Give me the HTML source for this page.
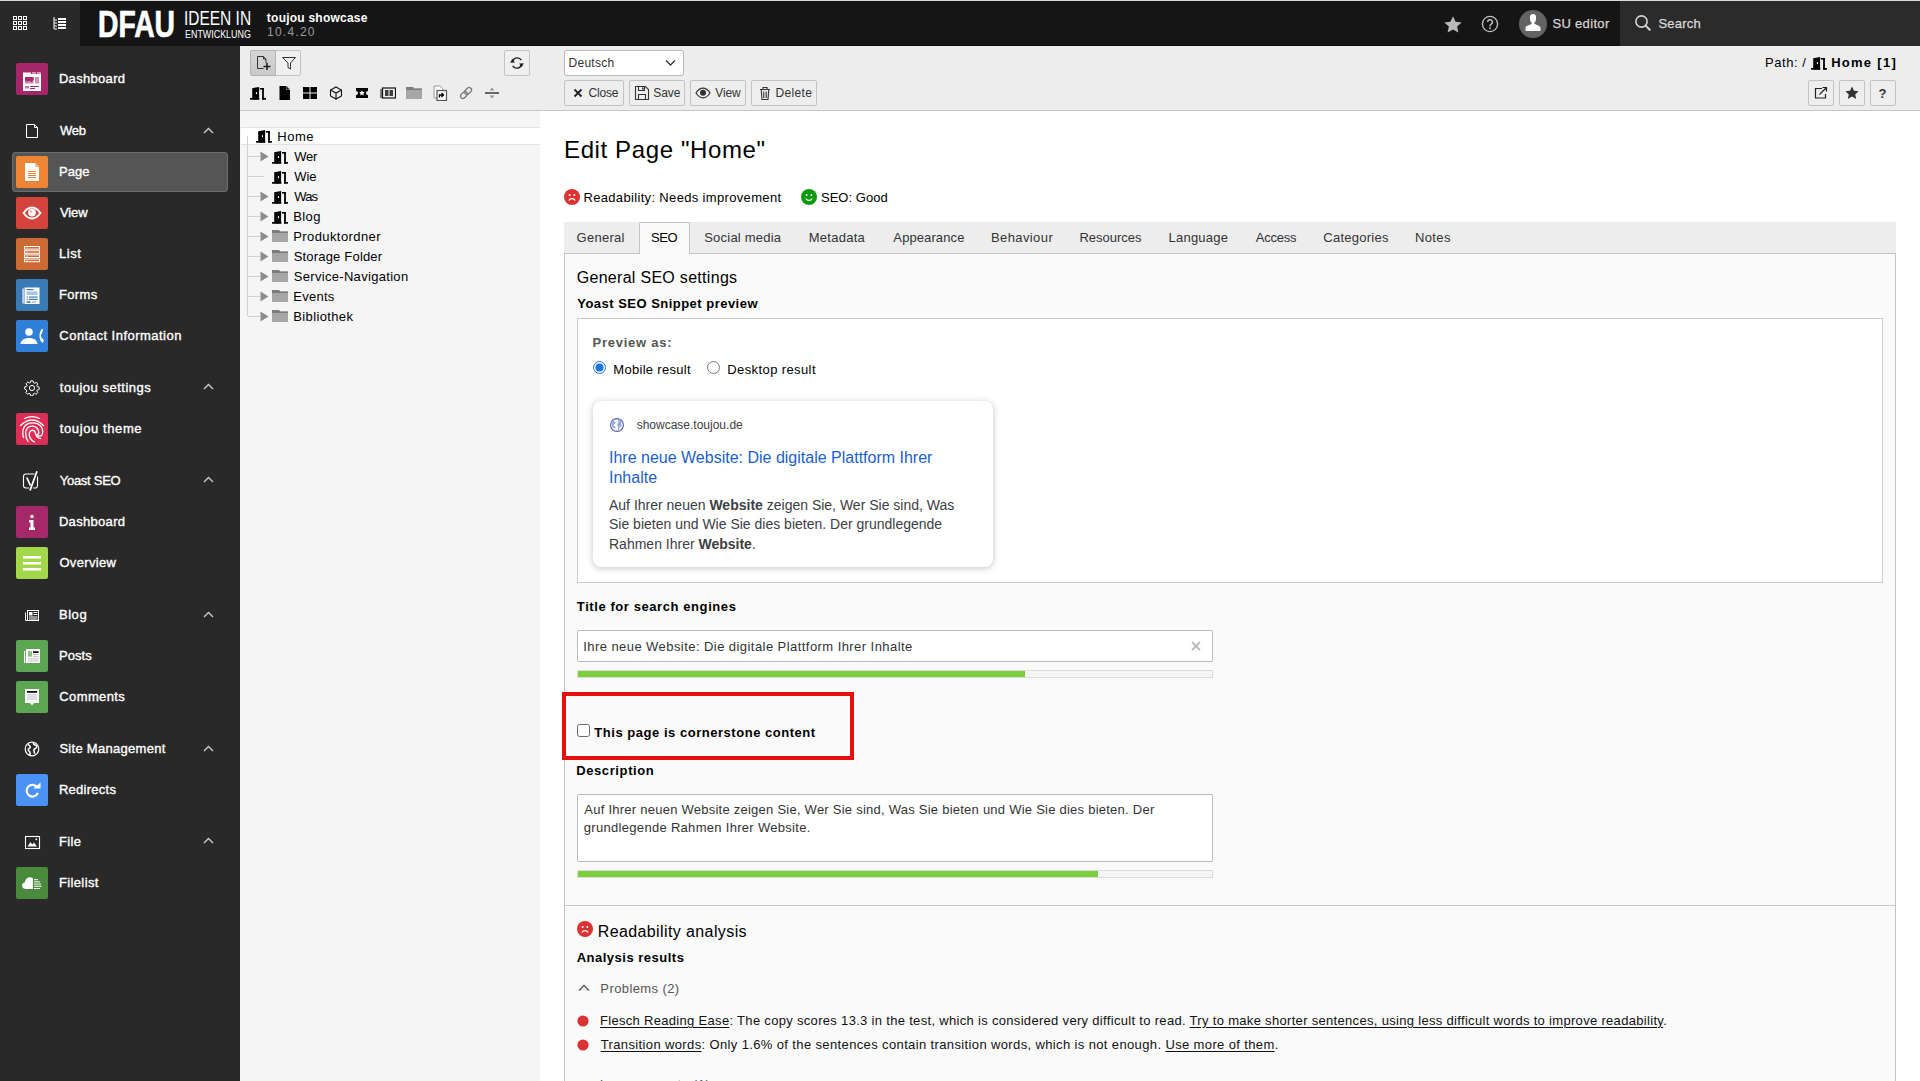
<!DOCTYPE html>
<html><head><meta charset="utf-8"><title>TYPO3</title>
<style>
html,body{margin:0;padding:0;width:1920px;height:1081px;overflow:hidden;background:#fff;}
body{position:relative;font-family:"Liberation Sans",sans-serif;}
.a{position:absolute;display:block;}
.t{position:absolute;white-space:nowrap;font-family:"Liberation Sans",sans-serif;}
u{text-decoration:underline;text-decoration-thickness:1px;text-underline-offset:2px;}
</style></head><body>
<div class="a" style="left:0px;top:0px;width:1920px;height:46px;background:#151515;"></div>
<div class="a" style="left:0px;top:0px;width:80px;height:46px;background:#292929;"></div>
<div class="a" style="left:1620px;top:0px;width:300px;height:46px;background:#2b2b2b;"></div>
<div class="a" style="left:0px;top:0px;width:1920px;height:1px;background:#d9d9d9;"></div>
<div class="a" style="left:240px;top:45px;width:1380px;height:1px;background:#0a0a0a;"></div>
<svg class="a" style="left:0px;top:0px;" width="40" height="46" viewBox="0 0 40 46"><rect x="13.5" y="16.5" width="3" height="3" fill="none" stroke="#fff" stroke-width="1"/><rect x="18.5" y="16.5" width="3" height="3" fill="none" stroke="#fff" stroke-width="1"/><rect x="23.5" y="16.5" width="3" height="3" fill="none" stroke="#fff" stroke-width="1"/><rect x="13.5" y="21.5" width="3" height="3" fill="none" stroke="#fff" stroke-width="1"/><rect x="18.5" y="21.5" width="3" height="3" fill="none" stroke="#fff" stroke-width="1"/><rect x="23.5" y="21.5" width="3" height="3" fill="none" stroke="#fff" stroke-width="1"/><rect x="13.5" y="26.5" width="3" height="3" fill="none" stroke="#fff" stroke-width="1"/><rect x="18.5" y="26.5" width="3" height="3" fill="none" stroke="#fff" stroke-width="1"/><rect x="23.5" y="26.5" width="3" height="3" fill="none" stroke="#fff" stroke-width="1"/></svg>
<svg class="a" style="left:50px;top:14px;" width="20" height="20" viewBox="0 0 20 20"><path d="M4 3v12h3M4 6h3M4 9h3M4 12h3" stroke="#fff" stroke-width="1" fill="none"/><rect x="8" y="4" width="8" height="2" fill="#fff"/><rect x="8" y="7" width="8" height="2" fill="#fff"/><rect x="8" y="10" width="8" height="2" fill="#fff"/><rect x="8" y="13" width="8" height="2" fill="#fff"/></svg>
<div class="t" style="left:98.1px;top:1.7px;font-size:37px;line-height:46px;font-weight:700;color:#fff;transform:scaleX(0.765);transform-origin:0 0;-webkit-text-stroke:0.7px #fff">DFAU</div>
<div class="t" style="left:184.2px;top:5.4px;font-size:21px;line-height:26px;color:#fff;transform:scaleX(0.737);transform-origin:0 0">IDEEN IN</div>
<div class="t" style="left:184.9px;top:27.6px;font-size:11px;line-height:13px;color:#fff;transform:scaleX(0.81);transform-origin:0 0">ENTWICKLUNG</div>
<div class="t" style="left:266.85px;top:11.44px;font-size:12px;line-height:14px;color:#fff;letter-spacing:0.229px;font-weight:700;">toujou showcase</div>
<div class="t" style="left:267.09px;top:24.84px;font-size:12px;line-height:14px;color:#9a9a9a;letter-spacing:1.224px;">10.4.20</div>
<svg class="a" style="left:1443px;top:15px;" width="20" height="18" viewBox="0 0 20 18"><path d="M10 1.2l2.6 5.6 6.1.6-4.6 4.1 1.3 6-5.4-3.1-5.4 3.1 1.3-6L1.3 7.4l6.1-.6z" fill="#b9b9b9"/></svg>
<svg class="a" style="left:1481px;top:15px;" width="18" height="18" viewBox="0 0 18 18"><circle cx="9" cy="9" r="7.6" fill="none" stroke="#bdbdbd" stroke-width="1.4"/><path d="M6.6 7.1a2.4 2.4 0 1 1 3.4 2.2c-.7.4-1 .8-1 1.6v.6" fill="none" stroke="#bdbdbd" stroke-width="1.5"/><circle cx="9" cy="13.2" r=".95" fill="#bdbdbd"/></svg>
<svg class="a" style="left:1519px;top:10px;" width="28" height="28" viewBox="0 0 28 28"><circle cx="14" cy="14" r="14" fill="#636363"/><path d="M11 6.5c0-1.6 1.3-2.5 3-2.5s3 .9 3 2.5v3c0 1.3-.8 2.6-1.6 3.1v1.2l4.8 2.2c.8.4 1.3 1.1 1.3 2V21H6.5v-2.9c0-.9.5-1.6 1.3-2l4.8-2.2v-1.2c-.8-.5-1.6-1.8-1.6-3.1z" fill="#fff"/></svg>
<div class="t" style="left:1552.41px;top:16.40px;font-size:13px;line-height:15px;color:#d4d4d4;letter-spacing:0.327px;-webkit-text-stroke:0.25px #d4d4d4;">SU editor</div>
<svg class="a" style="left:1634px;top:14px;" width="18" height="18" viewBox="0 0 18 18"><circle cx="7.5" cy="7.5" r="5.6" fill="none" stroke="#d6d6d6" stroke-width="1.6"/><path d="M11.6 11.6l4.2 4.2" stroke="#d6d6d6" stroke-width="2" stroke-linecap="round"/></svg>
<div class="t" style="left:1658.41px;top:16.40px;font-size:13px;line-height:15px;color:#dadada;letter-spacing:0.249px;-webkit-text-stroke:0.25px #dadada;">Search</div>
<div class="a" style="left:0px;top:46px;width:240px;height:1035px;background:#292929;"></div>
<div class="a" style="left:12px;top:152px;width:216px;height:40px;background:#555555;border:1px solid #6c6c6c;border-radius:3px;box-sizing:border-box;"></div>
<svg class="a" style="left:16px;top:63px;" width="32" height="32" viewBox="0 0 32 32"><rect width="32" height="32" rx="2" fill="#a4276a"/><path d="M7 9.5h8v1.5h10v17H7z" fill="#fff"/><rect x="16" y="9.5" width="4" height="1" fill="#fff"/><rect x="21" y="9.5" width="4" height="1" fill="#fff"/><path d="M9 14h8.5v6.5H9z" fill="#a4276a" opacity=".55"/><path d="M9 14h8.5v3l-2 2-2-1.5-2 1-2.5-1z" fill="#a4276a"/><rect x="19" y="14" width="4" height="6.5" fill="#a4276a" opacity=".5"/><rect x="9" y="23" width="4" height="2.5" fill="#a4276a" opacity=".6"/><rect x="14" y="23" width="9" height="1" fill="#a4276a"/><rect x="14" y="25" width="5" height="1" fill="#a4276a"/></svg>
<div class="t" style="left:58.93px;top:71.30px;font-size:13px;line-height:15px;color:#fff;letter-spacing:0.313px;-webkit-text-stroke:0.35px #fff;">Dashboard</div>
<svg class="a" style="left:24px;top:123px;" width="16" height="16" viewBox="0 0 16 16"><path d="M2.5 1.5h8l3 3v10h-11z" fill="none" stroke="#fff" stroke-width="1"/><path d="M10.5 1.5v3h3" fill="none" stroke="#fff" stroke-width="1"/></svg>
<div class="t" style="left:59.94px;top:123.30px;font-size:13px;line-height:15px;color:#fff;letter-spacing:-0.213px;-webkit-text-stroke:0.35px #fff;">Web</div>
<svg class="a" style="left:203px;top:126.5px;" width="11" height="8" viewBox="0 0 11 8"><path d="M1 6l4.5-4.5L10 6" fill="none" stroke="#cfcfcf" stroke-width="1.3"/></svg>
<svg class="a" style="left:16px;top:156px;" width="32" height="32" viewBox="0 0 32 32"><rect width="32" height="32" rx="2" fill="#ee8435"/><path d="M9 7h10l4 4v14H9z" fill="#fff"/><path d="M19 7v4h4z" fill="#f5b98a"/><g fill="#ee8435"><rect x="12" y="15" width="8" height="1"/><rect x="12" y="17" width="8" height="1"/><rect x="12" y="19" width="8" height="1"/><rect x="12" y="21" width="8" height="1"/></g></svg>
<div class="t" style="left:58.93px;top:164.30px;font-size:13px;line-height:15px;color:#fff;letter-spacing:0.094px;-webkit-text-stroke:0.35px #fff;">Page</div>
<svg class="a" style="left:16px;top:197px;" width="32" height="32" viewBox="0 0 32 32"><rect width="32" height="32" rx="2" fill="#d6433c"/><path d="M6.5 16c2.6-4.2 5.8-6.5 9.5-6.5s6.9 2.3 9.5 6.5c-2.6 4.2-5.8 6.5-9.5 6.5s-6.9-2.3-9.5-6.5z" fill="#fff"/><path d="M8.8 16c2.1-3 4.5-4.6 7.2-4.6s5.1 1.6 7.2 4.6c-2.1 3-4.5 4.6-7.2 4.6s-5.1-1.6-7.2-4.6z" fill="#d6433c"/><circle cx="16" cy="15.6" r="3.9" fill="#fff"/><circle cx="14.8" cy="14.4" r="1.2" fill="#d6433c" opacity=".45"/></svg>
<div class="t" style="left:59.94px;top:205.30px;font-size:13px;line-height:15px;color:#fff;letter-spacing:-0.117px;-webkit-text-stroke:0.35px #fff;">View</div>
<svg class="a" style="left:16px;top:238px;" width="32" height="32" viewBox="0 0 32 32"><rect width="32" height="32" rx="2" fill="#cc6a36"/><rect x="8.5" y="8.5" width="15" height="2.6" fill="none" stroke="#fff" stroke-width="1"/><rect x="10.5" y="9.5" width=".9" height=".9" fill="#fff"/><rect x="8.5" y="12.7" width="15" height="2.6" fill="none" stroke="#fff" stroke-width="1"/><rect x="10.5" y="13.7" width=".9" height=".9" fill="#fff"/><rect x="8.5" y="16.9" width="15" height="2.6" fill="none" stroke="#fff" stroke-width="1"/><rect x="10.5" y="17.9" width=".9" height=".9" fill="#fff"/><rect x="8.5" y="21.1" width="15" height="2.6" fill="none" stroke="#fff" stroke-width="1"/><rect x="10.5" y="22.1" width=".9" height=".9" fill="#fff"/></svg>
<div class="t" style="left:58.93px;top:246.30px;font-size:13px;line-height:15px;color:#fff;letter-spacing:0.577px;-webkit-text-stroke:0.35px #fff;">List</div>
<svg class="a" style="left:16px;top:279px;" width="32" height="32" viewBox="0 0 32 32"><rect width="32" height="32" rx="2" fill="#3b7bb5"/><path d="M6.5 9.5h1.2v15H6.5zM8.5 8.5h15v16.5h-15z" fill="#fff"/><rect x="10.5" y="10" width="7" height="1.2" fill="#3b7bb5"/><rect x="10.5" y="12.5" width="11" height="3.5" fill="#3b7bb5" opacity=".45"/><g fill="#3b7bb5"><rect x="10.5" y="17.5" width="1.2" height="1.2"/><rect x="13" y="17.5" width="8.5" height="1.2"/><rect x="10.5" y="19.8" width="1.2" height="1.2"/><rect x="13" y="19.8" width="8.5" height="1.2"/><rect x="10.5" y="22.2" width="4" height="1.6"/></g><rect x="16" y="22.2" width="4" height="1.6" fill="#3b7bb5" opacity=".45"/></svg>
<div class="t" style="left:58.93px;top:287.30px;font-size:13px;line-height:15px;color:#fff;letter-spacing:0.377px;-webkit-text-stroke:0.35px #fff;">Forms</div>
<svg class="a" style="left:16px;top:320px;" width="32" height="32" viewBox="0 0 32 32"><rect width="32" height="32" rx="2" fill="#2f80d8"/><circle cx="13" cy="12" r="3.8" fill="#fff"/><path d="M4.5 24c.4-3.8 3.6-6 8.5-6s8.1 2.2 8.5 6z" fill="#fff"/><path d="M26.5 8.5c-3.6 1.5-4.3 11.5 0 14.5l1.6-2.2-1.8-2.5c-.6.2-1-.5-1.2-1.8s-.1-2.6.5-2.8l1.4-3z" fill="#fff"/></svg>
<div class="t" style="left:59.34px;top:328.30px;font-size:13px;line-height:15px;color:#fff;letter-spacing:0.481px;-webkit-text-stroke:0.35px #fff;">Contact Information</div>
<svg class="a" style="left:24px;top:379.5px;" width="16" height="16" viewBox="0 0 16 16"><path d="M8 .8l1.2.2.4 1.8 1.1.5 1.5-1 1 .8-.2 0 .8 1-1 1.5.5 1.1 1.8.4.2 1.2-.2 1.2-1.8.4-.5 1.1 1 1.5-.8 1-1 .8-1.5-1-1.1.5-.4 1.8-1.2.2-1.2-.2-.4-1.8-1.1-.5-1.5 1-1-.8-.8-1 1-1.5-.5-1.1L.8 9.2.6 8l.2-1.2 1.8-.4.5-1.1-1-1.5.8-1 1-.8 1.5 1 1.1-.5.4-1.8z" fill="none" stroke="#fff" stroke-width="1"/><circle cx="8" cy="8" r="2.6" fill="none" stroke="#fff" stroke-width="1"/></svg>
<div class="t" style="left:59.80px;top:379.80px;font-size:13px;line-height:15px;color:#fff;letter-spacing:0.517px;-webkit-text-stroke:0.35px #fff;">toujou settings</div>
<svg class="a" style="left:203px;top:383.0px;" width="11" height="8" viewBox="0 0 11 8"><path d="M1 6l4.5-4.5L10 6" fill="none" stroke="#cfcfcf" stroke-width="1.3"/></svg>
<svg class="a" style="left:16px;top:413px;" width="32" height="32" viewBox="0 0 32 32"><rect width="32" height="32" rx="2" fill="#dc2e54"/><g fill="none" stroke="#fff" stroke-width="1.3" stroke-linecap="round"><path d="M8.5 5.5Q16 1.8 23.5 5.5"/><path d="M4.5 12.5Q16 1.5 27.5 12.5"/><path d="M7.5 24.5C5.5 17 8 10 16 9.8S27.5 15 26.5 20.5C26 23.5 22.5 24 21.5 21.5"/><path d="M12 28.5C8.5 23 9.5 17 11.5 15C14 12.2 20 12.5 22 16.5C23.2 19 22.5 21 21.5 21.5"/><path d="M18.5 29C14 27 12.5 22.5 13.5 19.5C14.5 16.5 18.5 16.5 19.2 19.5C19.8 22.5 21.5 25 24.5 25.5"/></g></svg>
<div class="t" style="left:59.80px;top:421.30px;font-size:13px;line-height:15px;color:#fff;letter-spacing:0.601px;-webkit-text-stroke:0.35px #fff;">toujou theme</div>
<svg class="a" style="left:22px;top:469.5px;" width="18" height="22" viewBox="0 0 18 22"><path d="M12.5 4H4a2.5 2.5 0 0 0-2.5 2.5v9A2.5 2.5 0 0 0 4 18h3M15.5 6.5v9a2.5 2.5 0 0 1-2.5 2.5h-2" fill="none" stroke="#fff" stroke-width="1.1"/><path d="M4.8 7.5l3.6 8M15 1.2L8 20.5" fill="none" stroke="#fff" stroke-width="1.8"/></svg>
<div class="t" style="left:59.71px;top:472.80px;font-size:13px;line-height:15px;color:#fff;letter-spacing:-0.263px;-webkit-text-stroke:0.35px #fff;">Yoast SEO</div>
<svg class="a" style="left:203px;top:476.0px;" width="11" height="8" viewBox="0 0 11 8"><path d="M1 6l4.5-4.5L10 6" fill="none" stroke="#cfcfcf" stroke-width="1.3"/></svg>
<svg class="a" style="left:16px;top:506px;" width="32" height="32" viewBox="0 0 32 32"><rect width="32" height="32" rx="2" fill="#a4286a"/><circle cx="16" cy="10.5" r="1.8" fill="#fff"/><path d="M13 14h4.5v7.5h1.5V24h-6v-2.5h1.5v-5H13z" fill="#fff"/></svg>
<div class="t" style="left:58.93px;top:514.30px;font-size:13px;line-height:15px;color:#fff;letter-spacing:0.313px;-webkit-text-stroke:0.35px #fff;">Dashboard</div>
<svg class="a" style="left:16px;top:547px;" width="32" height="32" viewBox="0 0 32 32"><rect width="32" height="32" rx="2" fill="#a3d74c"/><rect x="7" y="9" width="18" height="2.5" fill="#fff"/><rect x="7" y="15" width="18" height="2.5" fill="#fff"/><rect x="7" y="21" width="18" height="2.5" fill="#fff"/></svg>
<div class="t" style="left:59.38px;top:555.30px;font-size:13px;line-height:15px;color:#fff;letter-spacing:0.344px;-webkit-text-stroke:0.35px #fff;">Overview</div>
<svg class="a" style="left:24px;top:607px;" width="16" height="16" viewBox="0 0 16 16"><rect x="3.5" y="3.5" width="11" height="10" fill="none" stroke="#fff" stroke-width="1"/><path d="M1.5 5.5v8h2" fill="none" stroke="#fff" stroke-width="1"/><rect x="5" y="5" width="3.5" height="3.5" fill="#fff"/><path d="M9.5 5.5h4M9.5 7.5h4M5 10h8.5M5 12h8.5" stroke="#fff" stroke-width="1"/></svg>
<div class="t" style="left:58.93px;top:607.30px;font-size:13px;line-height:15px;color:#fff;letter-spacing:0.562px;-webkit-text-stroke:0.35px #fff;">Blog</div>
<svg class="a" style="left:203px;top:610.5px;" width="11" height="8" viewBox="0 0 11 8"><path d="M1 6l4.5-4.5L10 6" fill="none" stroke="#cfcfcf" stroke-width="1.3"/></svg>
<svg class="a" style="left:16px;top:640px;" width="32" height="32" viewBox="0 0 32 32"><rect width="32" height="32" rx="2" fill="#5ba553"/><rect x="8" y="11" width="1.2" height="12" fill="#fff"/><rect x="10" y="9" width="14" height="14" fill="#fff"/><rect x="12" y="11.2" width="4" height="5.5" fill="#5ba553" opacity=".7"/><rect x="17" y="11.2" width="5.5" height="1.8" fill="#111"/><g fill="#aaa"><rect x="17" y="14.3" width="5.5" height=".8"/><rect x="17" y="16.3" width="5.5" height=".8"/><rect x="12" y="18.5" width="10.5" height=".8"/><rect x="12" y="20.6" width="10.5" height=".8"/></g></svg>
<div class="t" style="left:58.93px;top:648.30px;font-size:13px;line-height:15px;color:#fff;letter-spacing:0.056px;-webkit-text-stroke:0.35px #fff;">Posts</div>
<svg class="a" style="left:16px;top:681px;" width="32" height="32" viewBox="0 0 32 32"><rect width="32" height="32" rx="2" fill="#5ba553"/><path d="M9 8h14v14h-5l-2 2.6-2-2.6H9z" fill="#fff"/><rect x="11" y="10" width="10" height="1.8" fill="#111"/><g fill="#aaa"><rect x="11" y="13.6" width="10" height=".8"/><rect x="11" y="15.6" width="10" height=".8"/><rect x="11" y="17.6" width="10" height=".8"/></g></svg>
<div class="t" style="left:59.34px;top:689.30px;font-size:13px;line-height:15px;color:#fff;letter-spacing:0.369px;-webkit-text-stroke:0.35px #fff;">Comments</div>
<svg class="a" style="left:24px;top:741px;" width="16" height="16" viewBox="0 0 16 16"><circle cx="8" cy="8" r="6.8" fill="none" stroke="#fff" stroke-width="1.2"/><path d="M4 3.5c1.5 1 2.5 1.2 2.3 2.8-.2 1.2-2.3 1-2 2.6.3 1.4 2 1.6 1.8 3.5l-.3 2M9.5 1.5c-.5 1.4.8 2.3 2 2.6 1.2.3 1.5 1.5 1 2.5-.6 1-2.3.7-2.6 2.2-.3 1.5 1 2.2.4 4" fill="none" stroke="#fff" stroke-width="1.6"/></svg>
<div class="t" style="left:59.41px;top:741.30px;font-size:13px;line-height:15px;color:#fff;letter-spacing:0.285px;-webkit-text-stroke:0.35px #fff;">Site Management</div>
<svg class="a" style="left:203px;top:744.5px;" width="11" height="8" viewBox="0 0 11 8"><path d="M1 6l4.5-4.5L10 6" fill="none" stroke="#cfcfcf" stroke-width="1.3"/></svg>
<svg class="a" style="left:16px;top:774px;" width="32" height="32" viewBox="0 0 32 32"><rect width="32" height="32" rx="2" fill="#4a92f5"/><path d="M21.3 13.5A5.8 5.8 0 1 0 21.8 19" fill="none" stroke="#fff" stroke-width="2.2"/><path d="M17.5 14.5h7V8.5z" fill="#fff"/></svg>
<div class="t" style="left:58.93px;top:782.30px;font-size:13px;line-height:15px;color:#fff;letter-spacing:0.266px;-webkit-text-stroke:0.35px #fff;">Redirects</div>
<svg class="a" style="left:24px;top:834.5px;" width="17" height="15" viewBox="0 0 17 15"><rect x="1.5" y="1.5" width="14" height="12" fill="none" stroke="#fff" stroke-width="1.1"/><path d="M3.5 11.5l3-4.5 1.8 2.5 1.7-2 3 4z" fill="#fff"/><rect x="11.5" y="3.5" width="1.6" height="1.6" fill="#fff"/></svg>
<div class="t" style="left:58.93px;top:833.80px;font-size:13px;line-height:15px;color:#fff;letter-spacing:0.399px;-webkit-text-stroke:0.35px #fff;">File</div>
<svg class="a" style="left:203px;top:837.0px;" width="11" height="8" viewBox="0 0 11 8"><path d="M1 6l4.5-4.5L10 6" fill="none" stroke="#cfcfcf" stroke-width="1.3"/></svg>
<svg class="a" style="left:16px;top:867px;" width="32" height="32" viewBox="0 0 32 32"><rect width="32" height="32" rx="2" fill="#4a8a3c"/><path d="M9.5 22c-2.2 0-3.5-1.6-3.5-3.4 0-1.7 1.2-3 2.8-3.2.3-2.9 2.3-5.2 5-5.2 1.1 0 2.2.4 3.1 1.1V22z" fill="#fff"/><g fill="#fff"><rect x="18" y="12.2" width="4" height="1"/><rect x="18" y="14.4" width="6" height="1"/><rect x="18" y="16.6" width="7" height="1"/><rect x="18" y="18.8" width="7.5" height="1"/><rect x="18" y="21" width="6" height="1"/></g></svg>
<div class="t" style="left:58.93px;top:875.30px;font-size:13px;line-height:15px;color:#fff;letter-spacing:0.375px;-webkit-text-stroke:0.35px #fff;">Filelist</div>
<div class="a" style="left:240px;top:46px;width:300px;height:64px;background:#ededed;"></div>
<div class="a" style="left:240px;top:110px;width:1680px;height:1px;background:#c6c6c6;"></div>
<div class="a" style="left:240px;top:111px;width:300px;height:970px;background:#f5f5f5;"></div>
<div class="a" style="left:250px;top:50px;width:51px;height:26px;background:#efefef;border:1px solid #c3c3c3;border-radius:2px;box-sizing:border-box;"></div>
<div class="a" style="left:250px;top:50px;width:26px;height:26px;background:linear-gradient(#d6d6d6,#c9c9c9);border:1px solid #b3b3b3;border-radius:2px 0 0 2px;box-sizing:border-box;"></div>
<svg class="a" style="left:256px;top:55px;" width="16" height="16" viewBox="0 0 16 16"><path d="M1.5 1.5h6l2.5 2.5v4M1.5 1.5v12h6" fill="none" stroke="#333" stroke-width="1"/><path d="M7.5 1.5v2.5H10" fill="none" stroke="#333" stroke-width="1"/><path d="M11 8v7M7.5 11.5h7" stroke="#222" stroke-width="1.6"/></svg>
<svg class="a" style="left:281px;top:55px;" width="16" height="16" viewBox="0 0 16 16"><path d="M1.5 2.5h13L9.5 8v6L7 12.5V8z" fill="none" stroke="#333" stroke-width="1"/></svg>
<div class="a" style="left:504px;top:50px;width:26px;height:26px;background:#efefef;border:1px solid #c3c3c3;border-radius:2px;box-sizing:border-box;"></div>
<svg class="a" style="left:509px;top:55px;" width="16" height="16" viewBox="0 0 16 16"><path d="M3.6 6.3A4.8 4.8 0 0 1 12.3 5.2M12.4 9.7A4.8 4.8 0 0 1 3.7 10.8" fill="none" stroke="#222" stroke-width="1.4"/><path d="M1.2 7.8L3.3 3.8l2.6 3.6zM14.8 8.2l-2.1 4-2.6-3.6z" fill="#222"/></svg>
<svg class="a" style="left:250px;top:86px;" width="16" height="14" viewBox="0 0 16 14"><rect x="0" y="12" width="9.3" height="1.7" fill="#000"/><path d="M2.2 2.2L9.1 .9V13.6H2.2z" fill="#000"/><rect x="5.9" y="6.2" width="1.1" height="1.9" fill="#fff"/><rect x="9.9" y="2" width="3.8" height="1.6" fill="#000"/><rect x="12.1" y="2" width="1.8" height="11.6" fill="#000"/><rect x="12.1" y="12" width="3.9" height="1.7" fill="#000"/></svg>
<svg class="a" style="left:278px;top:86px;" width="13" height="14" viewBox="0 0 12 14"><path d="M1 0h7l3.5 3.5V14H1z" fill="#000"/><path d="M8 0v3.5h3.5" fill="#fff" opacity=".9"/><path d="M8.5 .8v2.2h2.2z" fill="#000"/></svg>
<svg class="a" style="left:302px;top:86px;" width="16" height="14" viewBox="0 0 16 14"><rect x="1" y="1" width="6.5" height="5.5" fill="#000"/><rect x="8.5" y="1" width="6.5" height="5.5" fill="#000"/><rect x="1" y="7.5" width="6.5" height="5.5" fill="#000"/><rect x="8.5" y="7.5" width="6.5" height="5.5" fill="#000"/></svg>
<svg class="a" style="left:329px;top:86px;" width="14" height="14" viewBox="0 0 14 14"><path d="M7 1l5.5 3v6L7 13 1.5 10V4z M1.5 4L7 7l5.5-3M7 7v6" fill="none" stroke="#111" stroke-width="1.1"/></svg>
<svg class="a" style="left:355px;top:87px;" width="14" height="12" viewBox="0 0 14 12"><path d="M1 1h12v3a2 2 0 0 0 0 4v3H1V8a2 2 0 0 0 0-4z" fill="#000"/><path d="M7 3.2l.9 1.8 2 .2-1.5 1.3.5 2-1.9-1-1.9 1 .5-2L4.1 5.2l2-.2z" fill="#fff"/></svg>
<svg class="a" style="left:380px;top:87px;" width="16" height="12" viewBox="0 0 16 12"><rect x="2.5" y="1" width="13" height="10" fill="none" stroke="#111" stroke-width="1.2"/><path d="M1 2v9" stroke="#111" stroke-width="1"/><rect x="5" y="3" width="3.5" height="6" fill="#111" opacity=".8"/><rect x="9.5" y="3" width="3.5" height="6" fill="#111" opacity=".8"/></svg>
<svg class="a" style="left:406px;top:87px;" width="16" height="12" viewBox="0 0 16 12"><path d="M0 0h7l1 1.5h8V12H0z" fill="#a6a6a6"/><path d="M0 0h7l1 1.5h8v1.5H0z" fill="#7c7c7c"/></svg>
<svg class="a" style="left:433px;top:85px;" width="15" height="16" viewBox="0 0 15 16"><path d="M1 1h6l2.5 2.5V13H1z" fill="#fff" stroke="#999" stroke-width="1"/><rect x="4" y="5.5" width="9.5" height="10" fill="#fff" stroke="#555" stroke-width="1.2"/><path d="M6.5 12.5v-2.5h3.5M8.5 8l2 2-2 2" fill="none" stroke="#000" stroke-width="1.3"/></svg>
<svg class="a" style="left:458px;top:86px;" width="16" height="14" viewBox="0 0 16 14"><g transform="rotate(-45 8 7)"><rect x="1.2" y="4.6" width="7.6" height="4.8" rx="2.4" fill="none" stroke="#777" stroke-width="1.3"/><rect x="7.2" y="4.6" width="7.6" height="4.8" rx="2.4" fill="none" stroke="#777" stroke-width="1.3"/><rect x="6" y="6.2" width="4" height="1.6" fill="#999"/></g></svg>
<svg class="a" style="left:484px;top:86px;" width="16" height="14" viewBox="0 0 16 14"><rect x="1" y="6" width="14" height="2" fill="#666"/><path d="M5.5 4.5L8 1.5l2.5 3zM5.5 9.5L8 12.5l2.5-3z" fill="#9a9a9a"/></svg>
<div class="a" style="left:241px;top:127px;width:299px;height:18px;background:#fff;border-top:1px solid #e3e3e3;border-bottom:1px solid #e3e3e3;box-sizing:border-box;"></div>
<div class="a" style="left:247px;top:136px;width:1px;height:180px;background:#d0d0d0;"></div>
<svg class="a" style="left:256px;top:129px;" width="16" height="14" viewBox="0 0 16 14"><rect x="0" y="12" width="9.3" height="1.7" fill="#000"/><path d="M2.2 2.2L9.1 .9V13.6H2.2z" fill="#000"/><rect x="5.9" y="6.2" width="1.1" height="1.9" fill="#fff"/><rect x="9.9" y="2" width="3.8" height="1.6" fill="#000"/><rect x="12.1" y="2" width="1.8" height="11.6" fill="#000"/><rect x="12.1" y="12" width="3.9" height="1.7" fill="#000"/></svg>
<div class="t" style="left:277.33px;top:129.00px;font-size:13px;line-height:15px;color:#000;letter-spacing:0.489px;">Home</div>
<div class="a" style="left:248px;top:156px;width:12px;height:1px;background:#d0d0d0;"></div>
<svg class="a" style="left:260px;top:151px;" width="9" height="11" viewBox="0 0 9 11"><path d="M.5 .5l8 5-8 5z" fill="#8c8c8c"/></svg>
<svg class="a" style="left:272px;top:149.5px;" width="16" height="14" viewBox="0 0 16 14"><rect x="0" y="12" width="9.3" height="1.7" fill="#000"/><path d="M2.2 2.2L9.1 .9V13.6H2.2z" fill="#000"/><rect x="5.9" y="6.2" width="1.1" height="1.9" fill="#fff"/><rect x="9.9" y="2" width="3.8" height="1.6" fill="#000"/><rect x="12.1" y="2" width="1.8" height="11.6" fill="#000"/><rect x="12.1" y="12" width="3.9" height="1.7" fill="#000"/></svg>
<div class="t" style="left:294.24px;top:149.00px;font-size:13px;line-height:15px;color:#000;letter-spacing:-0.278px;">Wer</div>
<div class="a" style="left:248px;top:176px;width:16px;height:1px;background:#d0d0d0;"></div>
<svg class="a" style="left:272px;top:169.5px;" width="16" height="14" viewBox="0 0 16 14"><rect x="0" y="12" width="9.3" height="1.7" fill="#000"/><path d="M2.2 2.2L9.1 .9V13.6H2.2z" fill="#000"/><rect x="5.9" y="6.2" width="1.1" height="1.9" fill="#fff"/><rect x="9.9" y="2" width="3.8" height="1.6" fill="#000"/><rect x="12.1" y="2" width="1.8" height="11.6" fill="#000"/><rect x="12.1" y="12" width="3.9" height="1.7" fill="#000"/></svg>
<div class="t" style="left:294.24px;top:169.00px;font-size:13px;line-height:15px;color:#000;letter-spacing:-0.127px;">Wie</div>
<div class="a" style="left:248px;top:196px;width:12px;height:1px;background:#d0d0d0;"></div>
<svg class="a" style="left:260px;top:191px;" width="9" height="11" viewBox="0 0 9 11"><path d="M.5 .5l8 5-8 5z" fill="#8c8c8c"/></svg>
<svg class="a" style="left:272px;top:189.5px;" width="16" height="14" viewBox="0 0 16 14"><rect x="0" y="12" width="9.3" height="1.7" fill="#000"/><path d="M2.2 2.2L9.1 .9V13.6H2.2z" fill="#000"/><rect x="5.9" y="6.2" width="1.1" height="1.9" fill="#fff"/><rect x="9.9" y="2" width="3.8" height="1.6" fill="#000"/><rect x="12.1" y="2" width="1.8" height="11.6" fill="#000"/><rect x="12.1" y="12" width="3.9" height="1.7" fill="#000"/></svg>
<div class="t" style="left:294.24px;top:189.00px;font-size:13px;line-height:15px;color:#000;letter-spacing:-0.887px;">Was</div>
<div class="a" style="left:248px;top:216px;width:12px;height:1px;background:#d0d0d0;"></div>
<svg class="a" style="left:260px;top:211px;" width="9" height="11" viewBox="0 0 9 11"><path d="M.5 .5l8 5-8 5z" fill="#8c8c8c"/></svg>
<svg class="a" style="left:272px;top:209.5px;" width="16" height="14" viewBox="0 0 16 14"><rect x="0" y="12" width="9.3" height="1.7" fill="#000"/><path d="M2.2 2.2L9.1 .9V13.6H2.2z" fill="#000"/><rect x="5.9" y="6.2" width="1.1" height="1.9" fill="#fff"/><rect x="9.9" y="2" width="3.8" height="1.6" fill="#000"/><rect x="12.1" y="2" width="1.8" height="11.6" fill="#000"/><rect x="12.1" y="12" width="3.9" height="1.7" fill="#000"/></svg>
<div class="t" style="left:293.23px;top:209.00px;font-size:13px;line-height:15px;color:#000;letter-spacing:0.395px;">Blog</div>
<div class="a" style="left:248px;top:236px;width:12px;height:1px;background:#d0d0d0;"></div>
<svg class="a" style="left:260px;top:231px;" width="9" height="11" viewBox="0 0 9 11"><path d="M.5 .5l8 5-8 5z" fill="#8c8c8c"/></svg>
<svg class="a" style="left:272px;top:230px;" width="16" height="12" viewBox="0 0 16 12"><path d="M0 0h7l1 1.5h8V12H0z" fill="#a6a6a6"/><path d="M0 0h7l1 1.5h8v1.5H0z" fill="#7c7c7c"/></svg>
<div class="t" style="left:293.23px;top:229.00px;font-size:13px;line-height:15px;color:#000;letter-spacing:0.409px;">Produktordner</div>
<div class="a" style="left:248px;top:256px;width:12px;height:1px;background:#d0d0d0;"></div>
<svg class="a" style="left:260px;top:251px;" width="9" height="11" viewBox="0 0 9 11"><path d="M.5 .5l8 5-8 5z" fill="#8c8c8c"/></svg>
<svg class="a" style="left:272px;top:250px;" width="16" height="12" viewBox="0 0 16 12"><path d="M0 0h7l1 1.5h8V12H0z" fill="#a6a6a6"/><path d="M0 0h7l1 1.5h8v1.5H0z" fill="#7c7c7c"/></svg>
<div class="t" style="left:293.71px;top:249.00px;font-size:13px;line-height:15px;color:#000;letter-spacing:0.186px;">Storage Folder</div>
<div class="a" style="left:248px;top:276px;width:12px;height:1px;background:#d0d0d0;"></div>
<svg class="a" style="left:260px;top:271px;" width="9" height="11" viewBox="0 0 9 11"><path d="M.5 .5l8 5-8 5z" fill="#8c8c8c"/></svg>
<svg class="a" style="left:272px;top:270px;" width="16" height="12" viewBox="0 0 16 12"><path d="M0 0h7l1 1.5h8V12H0z" fill="#a6a6a6"/><path d="M0 0h7l1 1.5h8v1.5H0z" fill="#7c7c7c"/></svg>
<div class="t" style="left:293.71px;top:269.00px;font-size:13px;line-height:15px;color:#000;letter-spacing:0.314px;">Service-Navigation</div>
<div class="a" style="left:248px;top:296px;width:12px;height:1px;background:#d0d0d0;"></div>
<svg class="a" style="left:260px;top:291px;" width="9" height="11" viewBox="0 0 9 11"><path d="M.5 .5l8 5-8 5z" fill="#8c8c8c"/></svg>
<svg class="a" style="left:272px;top:290px;" width="16" height="12" viewBox="0 0 16 12"><path d="M0 0h7l1 1.5h8V12H0z" fill="#a6a6a6"/><path d="M0 0h7l1 1.5h8v1.5H0z" fill="#7c7c7c"/></svg>
<div class="t" style="left:293.23px;top:289.00px;font-size:13px;line-height:15px;color:#000;letter-spacing:0.259px;">Events</div>
<div class="a" style="left:248px;top:316px;width:12px;height:1px;background:#d0d0d0;"></div>
<svg class="a" style="left:260px;top:311px;" width="9" height="11" viewBox="0 0 9 11"><path d="M.5 .5l8 5-8 5z" fill="#8c8c8c"/></svg>
<svg class="a" style="left:272px;top:310px;" width="16" height="12" viewBox="0 0 16 12"><path d="M0 0h7l1 1.5h8V12H0z" fill="#a6a6a6"/><path d="M0 0h7l1 1.5h8v1.5H0z" fill="#7c7c7c"/></svg>
<div class="t" style="left:293.23px;top:309.00px;font-size:13px;line-height:15px;color:#000;letter-spacing:0.376px;">Bibliothek</div>
<div class="a" style="left:540px;top:46px;width:1380px;height:64px;background:#ededed;"></div>
<div class="a" style="left:564px;top:50px;width:120px;height:26px;background:#fff;border:1px solid #bbb;border-radius:2px;box-sizing:border-box;"></div>
<div class="t" style="left:568.62px;top:55.94px;font-size:12px;line-height:14px;color:#333;letter-spacing:0.240px;">Deutsch</div>
<svg class="a" style="left:665px;top:59px;" width="11" height="8" viewBox="0 0 11 8"><path d="M1 1.5l4.5 4.5L10 1.5" fill="none" stroke="#333" stroke-width="1.3"/></svg>
<div class="a" style="left:564px;top:80px;width:60px;height:26px;background:#eeeeee;border:1px solid #c3c3c3;border-radius:2px;box-sizing:border-box;"></div>
<div class="a" style="left:629px;top:80px;width:56px;height:26px;background:#eeeeee;border:1px solid #c3c3c3;border-radius:2px;box-sizing:border-box;"></div>
<div class="a" style="left:690px;top:80px;width:56px;height:26px;background:#eeeeee;border:1px solid #c3c3c3;border-radius:2px;box-sizing:border-box;"></div>
<div class="a" style="left:751px;top:80px;width:66px;height:26px;background:#eeeeee;border:1px solid #c3c3c3;border-radius:2px;box-sizing:border-box;"></div>
<svg class="a" style="left:571px;top:86px;" width="14" height="14" viewBox="0 0 14 14"><path d="M3.5 3.5l7 7M10.5 3.5l-7 7" stroke="#222" stroke-width="1.8"/></svg>
<div class="t" style="left:588.39px;top:85.84px;font-size:12px;line-height:14px;color:#333;letter-spacing:-0.134px;">Close</div>
<svg class="a" style="left:634px;top:85px;" width="16" height="16" viewBox="0 0 16 16"><path d="M1.5 1.5h10l3 3v10h-13z" fill="none" stroke="#333" stroke-width="1.1"/><path d="M4.5 1.5v4h6v-4M4.5 14.5v-5h7v5" fill="none" stroke="#333" stroke-width="1.1"/><rect x="8" y="2.5" width="1.6" height="2" fill="#333"/></svg>
<div class="t" style="left:653.36px;top:85.84px;font-size:12px;line-height:14px;color:#333;letter-spacing:-0.091px;">Save</div>
<svg class="a" style="left:695px;top:86px;" width="16" height="14" viewBox="0 0 16 14"><path d="M1 7c2-3.2 4.5-4.8 7-4.8S13 3.8 15 7c-2 3.2-4.5 4.8-7 4.8S3 10.2 1 7z" fill="none" stroke="#333" stroke-width="1.2"/><circle cx="8" cy="6.8" r="3" fill="#333"/></svg>
<div class="t" style="left:715.35px;top:85.84px;font-size:12px;line-height:14px;color:#333;letter-spacing:-0.129px;">View</div>
<svg class="a" style="left:757px;top:85px;" width="16" height="16" viewBox="0 0 16 16"><path d="M3 4.5h10M6 4.5V2.5h4v2M4.2 4.5l.8 10h6l.8-10M6.8 6.5v6.5M9.2 6.5v6.5" fill="none" stroke="#333" stroke-width="1.1"/></svg>
<div class="t" style="left:775.42px;top:85.84px;font-size:12px;line-height:14px;color:#333;letter-spacing:0.366px;">Delete</div>
<div class="t" style="left:1764.93px;top:55.00px;font-size:13px;line-height:15px;color:#000;letter-spacing:0.581px;">Path: /</div>
<svg class="a" style="left:1811px;top:56px;" width="16" height="14" viewBox="0 0 16 14"><rect x="0" y="12" width="9.3" height="1.7" fill="#000"/><path d="M2.2 2.2L9.1 .9V13.6H2.2z" fill="#000"/><rect x="5.9" y="6.2" width="1.1" height="1.9" fill="#fff"/><rect x="9.9" y="2" width="3.8" height="1.6" fill="#000"/><rect x="12.1" y="2" width="1.8" height="11.6" fill="#000"/><rect x="12.1" y="12" width="3.9" height="1.7" fill="#000"/></svg>
<div class="t" style="left:1831.13px;top:55.00px;font-size:13px;line-height:15px;color:#000;letter-spacing:1.283px;font-weight:700;">Home [1]</div>
<div class="a" style="left:1808px;top:80px;width:26px;height:26px;background:#eeeeee;border:1px solid #c3c3c3;border-radius:2px;box-sizing:border-box;"></div>
<div class="a" style="left:1839px;top:80px;width:26px;height:26px;background:#eeeeee;border:1px solid #c3c3c3;border-radius:2px;box-sizing:border-box;"></div>
<div class="a" style="left:1870px;top:80px;width:26px;height:26px;background:#eeeeee;border:1px solid #c3c3c3;border-radius:2px;box-sizing:border-box;"></div>
<svg class="a" style="left:1813px;top:85px;" width="16" height="16" viewBox="0 0 16 16"><path d="M9 3.5H2.5v9.5h10V9" fill="none" stroke="#222" stroke-width="1.2"/><path d="M6.5 9.5L13.5 2.5M9.5 2.5h4v4" fill="none" stroke="#222" stroke-width="1.2"/></svg>
<svg class="a" style="left:1844px;top:85px;" width="16" height="16" viewBox="0 0 16 16"><path d="M8 1.5l2 4.3 4.6.5-3.4 3.1 1 4.6L8 11.6 3.8 14l1-4.6L1.4 6.3 6 5.8z" fill="#333"/></svg>
<div class="t" style="left:1878.40px;top:86.00px;font-size:13px;line-height:15px;color:#333;font-weight:700;">?</div>
<div class="t" style="left:564.03px;top:135.88px;font-size:24px;line-height:28px;color:#000;letter-spacing:0.613px;">Edit Page &quot;Home&quot;</div>
<svg class="a" style="left:564px;top:189px;" width="16" height="16" viewBox="0 0 16 16"><circle cx="8" cy="8" r="8" fill="#dc3232"/><circle cx="5.6" cy="6" r="1" fill="#fff"/><circle cx="10.4" cy="6" r="1" fill="#fff"/><path d="M4.8 11.5a3.6 3.6 0 0 1 6.4 0" fill="none" stroke="#fff" stroke-width="1.2"/></svg>
<div class="t" style="left:583.43px;top:190.00px;font-size:13px;line-height:15px;color:#000;letter-spacing:0.338px;">Readability: Needs improvement</div>
<svg class="a" style="left:801px;top:189px;" width="16" height="16" viewBox="0 0 16 16"><circle cx="8" cy="8" r="8" fill="#0a9a0a"/><circle cx="5.6" cy="6" r="1" fill="#fff"/><circle cx="10.4" cy="6" r="1" fill="#fff"/><path d="M4.8 9.5a3.6 3.6 0 0 0 6.4 0" fill="none" stroke="#fff" stroke-width="1.2"/></svg>
<div class="t" style="left:820.91px;top:190.00px;font-size:13px;line-height:15px;color:#000;letter-spacing:0.056px;">SEO: Good</div>
<div class="a" style="left:564px;top:222px;width:1332px;height:32px;background:#ededed;border-bottom:1px solid #c3c3c3;box-sizing:border-box;"></div>
<div class="a" style="left:564px;top:254px;width:1332px;height:827px;background:#fafafa;border-left:1px solid #c3c3c3;border-right:1px solid #c3c3c3;box-sizing:border-box;"></div>
<div class="a" style="left:639px;top:222px;width:51px;height:32px;background:#fafafa;border:1px solid #c3c3c3;border-bottom:none;border-radius:2px 2px 0 0;box-sizing:border-box;"></div>
<div class="t" style="left:576.55px;top:230.00px;font-size:13px;line-height:15px;color:#333;letter-spacing:0.262px;">General</div>
<div class="t" style="left:651.11px;top:230.00px;font-size:13px;line-height:15px;color:#000;letter-spacing:-0.521px;">SEO</div>
<div class="t" style="left:704.21px;top:230.00px;font-size:13px;line-height:15px;color:#333;letter-spacing:0.224px;">Social media</div>
<div class="t" style="left:808.73px;top:230.00px;font-size:13px;line-height:15px;color:#333;letter-spacing:0.266px;">Metadata</div>
<div class="t" style="left:893.37px;top:230.00px;font-size:13px;line-height:15px;color:#333;letter-spacing:0.099px;">Appearance</div>
<div class="t" style="left:990.93px;top:230.00px;font-size:13px;line-height:15px;color:#333;letter-spacing:0.406px;">Behaviour</div>
<div class="t" style="left:1079.43px;top:230.00px;font-size:13px;line-height:15px;color:#333;letter-spacing:-0.013px;">Resources</div>
<div class="t" style="left:1168.43px;top:230.00px;font-size:13px;line-height:15px;color:#333;letter-spacing:0.258px;">Language</div>
<div class="t" style="left:1255.72px;top:230.00px;font-size:13px;line-height:15px;color:#333;letter-spacing:-0.231px;">Access</div>
<div class="t" style="left:1323.34px;top:230.00px;font-size:13px;line-height:15px;color:#333;letter-spacing:0.251px;">Categories</div>
<div class="t" style="left:1414.93px;top:230.00px;font-size:13px;line-height:15px;color:#333;letter-spacing:0.394px;">Notes</div>
<div class="t" style="left:576.70px;top:269.46px;font-size:16px;line-height:18px;color:#000;letter-spacing:0.297px;">General SEO settings</div>
<div class="t" style="left:577.28px;top:295.60px;font-size:13px;line-height:15px;color:#000;letter-spacing:0.476px;font-weight:700;">Yoast SEO Snippet preview</div>
<div class="a" style="left:577px;top:318px;width:1306px;height:265px;background:#fff;border:1px solid #cccccc;box-sizing:border-box;"></div>
<div class="t" style="left:592.53px;top:334.90px;font-size:13px;line-height:15px;color:#555;letter-spacing:0.758px;font-weight:700;">Preview as:</div>
<svg class="a" style="left:593px;top:361px;" width="13" height="13" viewBox="0 0 13 13"><circle cx="6.5" cy="6.5" r="6" fill="#fff" stroke="#1a73e8" stroke-width="1"/><circle cx="6.5" cy="6.5" r="4" fill="#1a73e8"/></svg>
<div class="t" style="left:613.33px;top:361.70px;font-size:13px;line-height:15px;color:#000;letter-spacing:0.289px;">Mobile result</div>
<svg class="a" style="left:707px;top:361px;" width="13" height="13" viewBox="0 0 13 13"><circle cx="6.5" cy="6.5" r="6" fill="#fff" stroke="#767676" stroke-width="1"/></svg>
<div class="t" style="left:727.33px;top:361.70px;font-size:13px;line-height:15px;color:#000;letter-spacing:0.390px;">Desktop result</div>
<div class="a" style="left:593px;top:401px;width:400px;height:166px;background:#fff;border-radius:8px;box-shadow:0 1px 6px rgba(32,33,36,.28);"></div>
<svg class="a" style="left:610px;top:418px;" width="14" height="14" viewBox="0 0 14 14"><circle cx="7" cy="7" r="6.4" fill="#fff" stroke="#4e5cb0" stroke-width="1.1"/><path d="M3.2 2.8c1.2.3 2.3.8 2.4 1.8.1 1-.9 1.2-1.6 1.8-.6.6.2 1.4.9 1.9.8.6.5 1.6.2 2.6-1.3-.5-2.8-2-3.3-4-.2-1.5.4-3 1.4-4.1zM8.3 1.1c1.6.3 3.2 1.4 4 3-.8.2-1.5.4-1.4 1.3.1.9 1.3 1.5.8 2.5-.5 1-1.7.6-2.3 1.4-.6.8-.2 2.4-.5 3.4-.9-1.2-1.4-2.6-.9-4 .3-1-1-1.4-.9-2.4.1-1 1.5-1.1 1.5-2.1 0-.6-.6-1-.3-1.1z" fill="#9aa8d8"/></svg>
<div class="t" style="left:636.67px;top:418.24px;font-size:12px;line-height:14px;color:#3c4043;">showcase.toujou.de</div>
<div class="t" style="left:609px;top:448.4px;width:360px;font-size:16px;line-height:20px;color:#1a5fcd;">Ihre neue Website: Die digitale Plattform Ihrer<br>Inhalte</div>
<div class="t" style="left:609px;top:495.5px;width:380px;font-size:14px;line-height:19.7px;color:#3c4043;">Auf Ihrer neuen <b>Website</b> zeigen Sie, Wer Sie sind, Was<br>Sie bieten und Wie Sie dies bieten. Der grundlegende<br>Rahmen Ihrer <b>Website</b>.</div>
<div class="t" style="left:576.85px;top:599.00px;font-size:13px;line-height:15px;color:#000;letter-spacing:0.580px;font-weight:700;">Title for search engines</div>
<div class="a" style="left:577px;top:630px;width:636px;height:32px;background:#fff;border:1px solid #bbbbbb;border-radius:2px;box-sizing:border-box;"></div>
<div class="t" style="left:583.20px;top:639.00px;font-size:13px;line-height:15px;color:#333;letter-spacing:0.438px;">Ihre neue Website: Die digitale Plattform Ihrer Inhalte</div>
<svg class="a" style="left:1190px;top:640px;" width="12" height="12" viewBox="0 0 12 12"><path d="M2 2l8 8M10 2l-8 8" stroke="#bbb" stroke-width="1.8"/></svg>
<div class="a" style="left:577px;top:670px;width:636px;height:8px;background:#f5f5f5;border:1px solid #dddddd;box-sizing:border-box;"></div>
<div class="a" style="left:578px;top:671px;width:447px;height:6px;background:#7ad03a;"></div>
<div class="a" style="left:562px;top:692px;width:292px;height:68px;background:none;border:4px solid #e8100f;box-sizing:border-box;"></div>
<div class="a" style="left:577px;top:724px;width:13px;height:13px;background:#fff;border:1px solid #6b6b6b;border-radius:2.5px;box-sizing:border-box;"></div>
<div class="t" style="left:594.35px;top:725.00px;font-size:13px;line-height:15px;color:#000;letter-spacing:0.528px;font-weight:700;">This page is cornerstone content</div>
<div class="t" style="left:576.13px;top:763.00px;font-size:13px;line-height:15px;color:#000;letter-spacing:0.616px;font-weight:700;">Description</div>
<div class="a" style="left:577px;top:794px;width:636px;height:68px;background:#fff;border:1px solid #bbbbbb;border-radius:2px;box-sizing:border-box;"></div>
<div class="t" style="left:584.37px;top:802.00px;font-size:13px;line-height:15px;color:#333;letter-spacing:0.243px;">Auf Ihrer neuen Website zeigen Sie, Wer Sie sind, Was Sie bieten und Wie Sie dies bieten. Der</div>
<div class="t" style="left:583.85px;top:820.00px;font-size:13px;line-height:15px;color:#333;letter-spacing:0.301px;">grundlegende Rahmen Ihrer Website.</div>
<div class="a" style="left:577px;top:870px;width:636px;height:8px;background:#f5f5f5;border:1px solid #dddddd;box-sizing:border-box;"></div>
<div class="a" style="left:578px;top:871px;width:520px;height:6px;background:#7ad03a;"></div>
<div class="a" style="left:565px;top:905px;width:1330px;height:1px;background:#c8c8c8;"></div>
<svg class="a" style="left:577px;top:921px;" width="16" height="16" viewBox="0 0 16 16"><circle cx="8" cy="8" r="8" fill="#dc3232"/><circle cx="5.6" cy="6" r="1" fill="#fff"/><circle cx="10.4" cy="6" r="1" fill="#fff"/><path d="M4.8 11.5a3.6 3.6 0 0 1 6.4 0" fill="none" stroke="#fff" stroke-width="1.2"/></svg>
<div class="t" style="left:597.69px;top:922.66px;font-size:16px;line-height:18px;color:#000;letter-spacing:0.394px;">Readability analysis</div>
<div class="t" style="left:576.68px;top:950.00px;font-size:13px;line-height:15px;color:#000;letter-spacing:0.503px;font-weight:700;">Analysis results</div>
<svg class="a" style="left:578px;top:983px;" width="12" height="9" viewBox="0 0 12 9"><path d="M1 7.5l5-5 5 5" fill="none" stroke="#555" stroke-width="1.4"/></svg>
<div class="t" style="left:600.33px;top:980.60px;font-size:13px;line-height:15px;color:#555;letter-spacing:0.406px;">Problems (2)</div>
<svg class="a" style="left:577px;top:1015px;" width="12" height="12" viewBox="0 0 12 12"><circle cx="6" cy="6" r="5.6" fill="#dc3232"/></svg>
<svg class="a" style="left:577px;top:1039px;" width="12" height="12" viewBox="0 0 12 12"><circle cx="6" cy="6" r="5.6" fill="#dc3232"/></svg>
<div class="t" style="left:599.93px;top:1012.70px;font-size:13px;line-height:15px;color:#111;letter-spacing:0.314px;"><u>Flesch Reading Ease</u>: The copy scores 13.3 in the test, which is considered very difficult to read. <u>Try to make shorter sentences, using less difficult words to improve readability</u>.</div>
<div class="t" style="left:600.71px;top:1037.00px;font-size:13px;line-height:15px;color:#111;letter-spacing:0.370px;"><u>Transition words</u>: Only 1.6% of the sentences contain transition words, which is not enough. <u>Use more of them</u>.</div>
<div class="t" style="left:599.80px;top:1077.00px;font-size:13px;line-height:15px;color:#555;letter-spacing:0.543px;">Improvements (1)</div>
</body></html>
